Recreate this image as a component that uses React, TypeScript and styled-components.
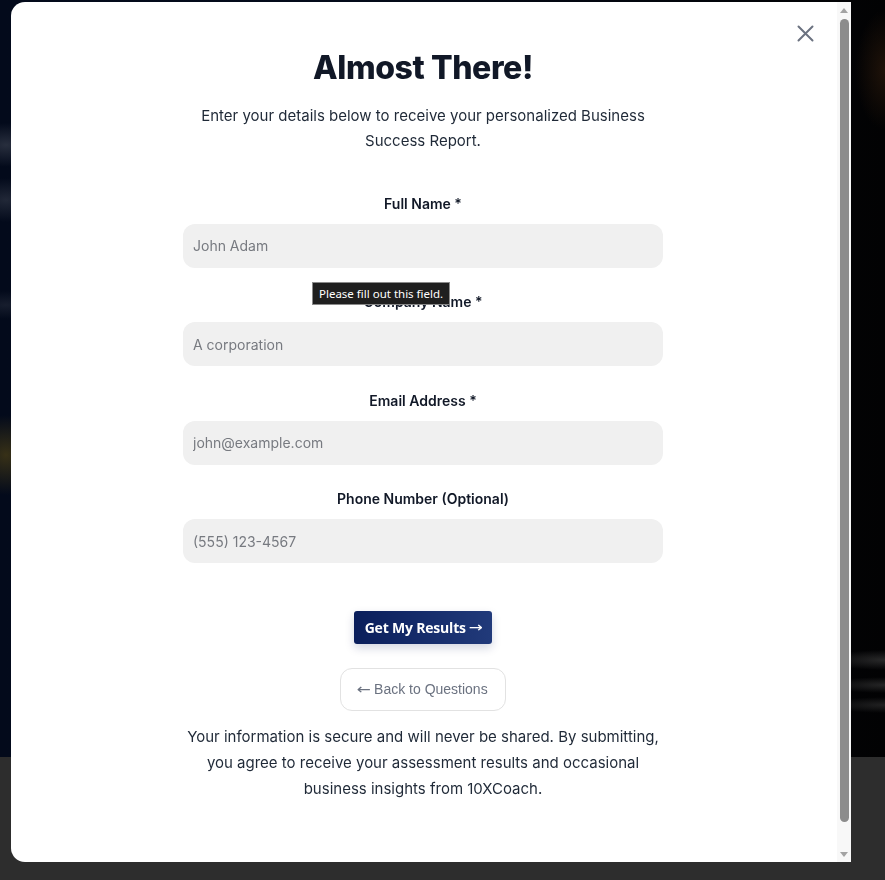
import React from "react";
import styled, { createGlobalStyle } from "styled-components";

const GlobalStyle = createGlobalStyle`
  html, body { margin: 0; padding: 0; }
  body {
    width: 885px;
    height: 880px;
    overflow: hidden;
    font-family: "Inter", "Liberation Sans", sans-serif;
    background: #2d2d2d;
  }
  * { box-sizing: border-box; }
`;

const Page = styled.div`
  width: 885px;
  height: 880px;
  display: flex;
  flex-direction: column;
`;

const Hero = styled.div`
  height: 757px;
  background:
    radial-gradient(ellipse 40px 22px at 6px 145px, rgba(70, 76, 90, 0.55), transparent),
    radial-gradient(ellipse 40px 22px at 6px 200px, rgba(70, 76, 90, 0.45), transparent),
    radial-gradient(ellipse 40px 14px at 6px 305px, rgba(60, 66, 80, 0.35), transparent),
    radial-gradient(ellipse 40px 40px at 6px 455px, rgba(90, 74, 20, 0.6), transparent),
    radial-gradient(ellipse 30px 60px at 885px 70px, rgba(60, 35, 15, 0.5), transparent),
    radial-gradient(ellipse 60px 10px at 885px 660px, rgba(80, 80, 80, 0.5), transparent),
    radial-gradient(ellipse 60px 8px at 885px 685px, rgba(80, 80, 80, 0.45), transparent),
    radial-gradient(ellipse 60px 8px at 885px 705px, rgba(80, 80, 80, 0.4), transparent),
    linear-gradient(to right, #030a1b 0%, #040b1a 40%, #020203 100%);
`;

const Lower = styled.div`
  flex: 1;
  background:
    radial-gradient(ellipse 300px 14px at 100px 880px, #040404 55%, transparent),
    #2d2d2d;
`;

const Modal = styled.div`
  position: fixed;
  left: 11px;
  top: 2px;
  width: 840px;
  height: 860px;
  background: #ffffff;
  border-radius: 14px 0 0 14px;
  overflow: hidden;
  display: flex;
`;

const Content = styled.div`
  position: relative;
  flex: 1;
  display: flex;
  flex-direction: column;
  align-items: center;
  padding: 46px 25px 0 23px;
`;

const ScrollRail = styled.div`
  width: 14px;
  flex-shrink: 0;
  background: #f8f8f8;
  display: flex;
  flex-direction: column;
  align-items: center;
`;

const RailArrow = styled.div`
  height: 16px;
  width: 14px;
  display: flex;
  align-items: center;
  justify-content: center;
  color: #a3a3a3;
`;

const RailTrack = styled.div`
  flex: 1;
  width: 100%;
  padding: 1px 2px 24px 2.5px;
  display: flex;
`;

const RailThumb = styled.div`
  flex: 1;
  background: #8c8c8c;
  border-radius: 5px;
`;

const CloseButton = styled.button`
  position: absolute;
  top: 18px;
  right: 19px;
  width: 26px;
  height: 26px;
  padding: 0;
  border: none;
  background: transparent;
  display: flex;
  align-items: center;
  justify-content: center;
  color: #6b7280;
  cursor: pointer;
`;

const Title = styled.h2`
  margin: 0;
  font-family: "Inter", sans-serif;
  font-weight: 800;
  font-size: 32px;
  line-height: 40px;
  letter-spacing: -0.4px;
  color: #111827;
`;

const Subtitle = styled.p`
  margin: 15px 0 0;
  max-width: 448px;
  text-align: center;
  font-size: 15px;
  line-height: 25px;
  color: #1f2937;
`;

const Form = styled.form`
  margin-top: 40.5px;
  width: 480px;
  display: flex;
  flex-direction: column;
  align-items: center;
  gap: 24.5px;
`;

const Field = styled.div`
  position: relative;
  width: 100%;
  display: flex;
  flex-direction: column;
  align-items: center;
  gap: 10px;
`;

const Label = styled.label`
  font-size: 14px;
  line-height: 20px;
  font-weight: 600;
  color: #111827;
`;

const Input = styled.input`
  width: 100%;
  height: 44px;
  border: none;
  outline: none;
  border-radius: 12px;
  background: #f0f0f0;
  padding: 0 10px;
  font-family: "Inter", sans-serif;
  font-size: 14px;
  color: #111827;

  &::placeholder {
    color: #777a80;
  }
`;

const Tooltip = styled.div`
  position: absolute;
  left: 129px;
  top: -10px;
  height: 23px;
  padding: 0 6px;
  display: flex;
  align-items: center;
  background: #1f1f1f;
  border: 1px solid #8a8a8a;
  color: #ffffff;
  font-family: "Noto Sans", "Open Sans", sans-serif;
  font-size: 11.5px;
  white-space: nowrap;
`;

const Actions = styled.div`
  margin-top: 23px;
  display: flex;
  flex-direction: column;
  align-items: center;
  gap: 24px;
`;

const PrimaryButton = styled.button`
  height: 33px;
  padding: 0 11px;
  border: none;
  border-radius: 3px;
  background: linear-gradient(to right, #0a1e5b, #213a7a);
  color: #ffffff;
  font-family: "Open Sans", sans-serif;
  font-weight: 700;
  font-size: 14px;
  letter-spacing: -0.2px;
  box-shadow: 0 4px 10px rgba(10, 30, 90, 0.18);
  cursor: pointer;
  display: flex;
  align-items: center;
  gap: 4px;
`;

const SecondaryButton = styled.button`
  height: 43px;
  padding: 0 17px;
  border: 1px solid #e2e2e2;
  border-radius: 12px;
  background: #ffffff;
  color: #6b7280;
  font-family: "Liberation Sans", Arial, sans-serif;
  font-size: 14px;
  cursor: pointer;
  display: flex;
  align-items: center;
  gap: 4px;
`;

const Arrow = styled.span`
  font-family: "DejaVu Sans", sans-serif;
  font-weight: 400;
  font-size: 14px;
  line-height: 1;
  display: inline-block;
  transform: scaleX(1.2);
`;

const Note = styled.p`
  margin: 13px 0 0;
  max-width: 480px;
  text-align: center;
  font-size: 15px;
  line-height: 26px;
  color: #1f2937;
`;

const fields = [
  { id: "name", label: "Full Name *", placeholder: "John Adam", type: "text" },
  { id: "company", label: "Company Name *", placeholder: "A corporation", type: "text" },
  { id: "email", label: "Email Address *", placeholder: "john@example.com", type: "email" },
  { id: "phone", label: "Phone Number (Optional)", placeholder: "(555) 123-4567", type: "tel" },
];

export default function App() {
  return (
    <>
      <GlobalStyle />
      <Page>
        <Hero />
        <Lower />
      </Page>
      <Modal>
        <Content>
          <CloseButton aria-label="Close">
            <svg width="19" height="19" viewBox="0 0 19 19" fill="none">
              <path d="M2.5 2.5L16.5 16.5M16.5 2.5L2.5 16.5" stroke="currentColor" strokeWidth="2" strokeLinecap="round" />
            </svg>
          </CloseButton>
          <Title>Almost There!</Title>
          <Subtitle>
            Enter your details below to receive your personalized Business Success Report.
          </Subtitle>
          <Form onSubmit={(e) => e.preventDefault()}>
            {fields.map((f, i) => (
              <Field key={f.id}>
                <Label htmlFor={f.id}>{f.label}</Label>
                <Input id={f.id} type={f.type} placeholder={f.placeholder} />
                {i === 1 && <Tooltip>Please fill out this field.</Tooltip>}
              </Field>
            ))}
            <Actions>
              <PrimaryButton type="submit">
                Get My Results <Arrow>→</Arrow>
              </PrimaryButton>
              <SecondaryButton type="button">
                <Arrow>←</Arrow> Back to Questions
              </SecondaryButton>
            </Actions>
          </Form>
          <Note>
            Your information is secure and will never be shared. By submitting, you agree to
            receive your assessment results and occasional business insights from 10XCoach.
          </Note>
        </Content>
        <ScrollRail aria-hidden="true">
          <RailArrow>
            <svg width="8" height="5" viewBox="0 0 8 5">
              <polygon points="0,5 4,0 8,5" fill="currentColor" />
            </svg>
          </RailArrow>
          <RailTrack>
            <RailThumb />
          </RailTrack>
          <RailArrow>
            <svg width="8" height="5" viewBox="0 0 8 5">
              <polygon points="0,0 8,0 4,5" fill="currentColor" />
            </svg>
          </RailArrow>
        </ScrollRail>
      </Modal>
    </>
  );
}
